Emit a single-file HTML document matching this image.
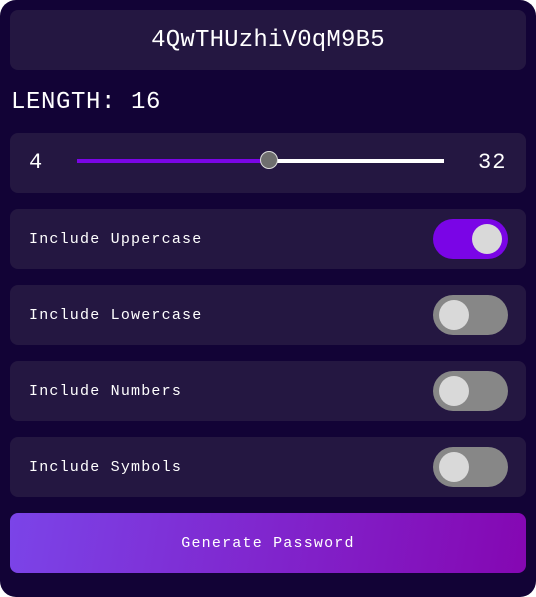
<!DOCTYPE html>
<html><head><style>
html,body{margin:0;padding:0;background:#fff;}
.c{position:absolute;left:0;top:0;width:536px;height:597px;background:#120336;border-radius:16px;font-family:"Liberation Mono",monospace;color:#fff;}
.card{position:absolute;left:10px;width:516px;height:60px;background:#241741;border-radius:8px;}
.pw{top:10px;text-align:center;line-height:62px;font-size:24px;letter-spacing:0.2px;}
.len{position:absolute;left:11px;top:89px;font-size:24px;letter-spacing:0.6px;}
.row{font-size:15px;letter-spacing:1.2px;line-height:62px;padding-left:19px;box-sizing:border-box;}
.tg{position:absolute;left:423px;top:10px;width:75px;height:40px;border-radius:20px;background:#878787;}
.tg i{position:absolute;left:6px;top:5px;width:30px;height:30px;border-radius:50%;background:#d9d9d9;}
.tg.on{background:#7a05e6;}
.tg.on i{left:39px;}
.btn{top:513px;background:linear-gradient(100deg,#7b44e8,#8507b2);text-align:center;line-height:62px;font-size:15px;letter-spacing:1.2px;}
</style></head><body>
<div class="c">
<div class="card pw">4QwTHUzhiV0qM9B5</div>
<div class="len">LENGTH: 16</div>
<div class="card" style="top:133px">
 <span style="position:absolute;left:19px;top:17px;font-size:22px">4</span>
 <div style="position:absolute;left:67px;top:26px;width:192px;height:4px;background:#7a05e6"></div>
 <div style="position:absolute;left:259px;top:26px;width:175px;height:4px;background:#fff"></div>
 <div style="position:absolute;left:250px;top:18px;width:16px;height:16px;border-radius:50%;background:#6e6e6e;border:1px solid #ddd"></div>
 <span style="position:absolute;left:468px;top:17px;font-size:22px;letter-spacing:1px">32</span>
</div>
<div class="card row" style="top:209px">Include Uppercase<div class="tg on"><i></i></div></div>
<div class="card row" style="top:285px">Include Lowercase<div class="tg"><i></i></div></div>
<div class="card row" style="top:361px">Include Numbers<div class="tg"><i></i></div></div>
<div class="card row" style="top:437px">Include Symbols<div class="tg"><i></i></div></div>
<div class="card btn">Generate Password</div>
</div>
</body></html>
